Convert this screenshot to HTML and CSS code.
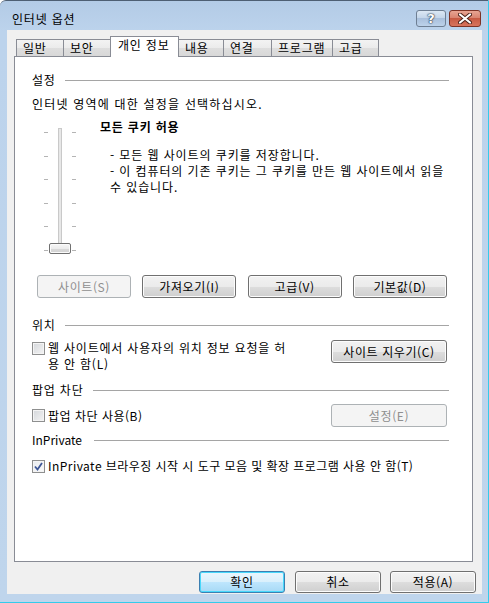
FILE: index.html
```html
<!DOCTYPE html>
<html lang="ko">
<head>
    <meta charset="UTF-8">
    <title>인터넷 옵션</title>
    <link rel="stylesheet" href="styles.css">
</head>
<body>
    <div class="window">
        <!-- Title bar -->
        <div class="titlebar">
            <span class="title">인터넷 옵션</span>
            <div class="caption-buttons">
                <div class="cap-btn help"><span>?</span></div>
                <div class="cap-btn close">
                    <svg width="14" height="11" viewBox="0 0 14 11">
                        <path d="M2 1.5 L12 9.5 M12 1.5 L2 9.5" stroke="#4a2018" stroke-width="4" stroke-linecap="round"/>
                        <path d="M2 1.5 L12 9.5 M12 1.5 L2 9.5" stroke="#ffffff" stroke-width="2.2" stroke-linecap="round"/>
                    </svg>
                </div>
            </div>
        </div>

        <div class="client">
            <!-- Tabs -->
            <div class="tabs">
                <div class="tab w-1">일반</div>
                <div class="tab w-2">보안</div>
                <div class="tab active w-3">개인 정보</div>
                <div class="tab w-4">내용</div>
                <div class="tab w-5">연결</div>
                <div class="tab w-6">프로그램</div>
                <div class="tab w-7">고급</div>
            </div>

            <div class="panel">
                <div class="group-title first"><span>설정</span><div class="rule"></div></div>
                <div class="intro">인터넷 영역에 대한 설정을 선택하십시오.</div>

                <div class="setting-row">
                    <div class="slider">
                        <div class="ticks">
                            <i></i><i></i><i></i><i></i><i></i><i></i>
                        </div>
                        <div class="track"></div>
                        <div class="ticks">
                            <i></i><i></i><i></i><i></i><i></i><i></i>
                        </div>
                        <div class="thumb"></div>
                    </div>
                    <div class="setting-text">
                        <div class="level">모든 쿠키 허용</div>
                        <div class="desc">
                            - 모든 웹 사이트의 쿠키를 저장합니다.<br>
                            - 이 컴퓨터의 기존 쿠키는 그 쿠키를 만든 웹 사이트에서 읽을<br>
                            수 있습니다.
                        </div>
                    </div>
                </div>

                <div class="button-row">
                    <button class="btn wide disabled">사이트(S)</button>
                    <button class="btn wide">가져오기(I)</button>
                    <button class="btn wide">고급(V)</button>
                    <button class="btn wide">기본값(D)</button>
                </div>

                <div class="group-title loc"><span>위치</span><div class="rule"></div></div>
                <div class="check-row top">
                    <span class="checkbox"></span>
                    <span class="check-label loc-label">웹 사이트에서 사용자의 위치 정보 요청을 허<br>용 안 함(L)</span>
                    <button class="btn side">사이트 지우기(C)</button>
                </div>

                <div class="group-title popup"><span>팝업 차단</span><div class="rule"></div></div>
                <div class="check-row mid">
                    <span class="checkbox"></span>
                    <span class="check-label">팝업 차단 사용(B)</span>
                    <button class="btn side disabled">설정(E)</button>
                </div>

                <div class="group-title private"><span>InPrivate</span><div class="rule"></div></div>
                <div class="check-row last">
                    <span class="checkbox checked">
                        <svg width="9" height="9" viewBox="0 0 9 9">
                            <path d="M1 4.5 L3.5 7.5 L8 1" fill="none" stroke="#3d5696" stroke-width="1.8"/>
                        </svg>
                    </span>
                    <span class="check-label private-label">InPrivate 브라우징 시작 시 도구 모음 및 확장 프로그램 사용 안 함(T)</span>
                </div>
            </div>

            <!-- Dialog buttons -->
            <div class="footer">
                <button class="btn dlg default">확인</button>
                <button class="btn dlg">취소</button>
                <button class="btn dlg">적용(A)</button>
            </div>
        </div>
    </div>
</body>
</html>
```

FILE: styles.css
```css
/* Window frame */
* {
    box-sizing: border-box;
}
body {
    margin: 0;
    font-family: "Noto Sans CJK KR", "Noto Sans", sans-serif;
    font-size: 12px;
    line-height: 16px;
    letter-spacing: 0.8px;
    color: #000000;
    background: #ffffff;
}
.window {
    width: 489px;
    height: 603px;
    display: flex;
    flex-direction: column;
    background: linear-gradient(to bottom, #b3cbe6 0px, #bcd3ec 30px, #bfd5ec 100%);
    border-top: 1px solid #4e5f73;
    border-right: 1px solid #34cbeb;
    border-bottom: 1px solid #34cbeb;
    border-top-left-radius: 6px;
}
.titlebar {
    height: 29px;
    display: flex;
    align-items: flex-start;
    justify-content: space-between;
}
.title {
    margin: 10px 0 0 12px;
    font-size: 12px;
    color: #000000;
}
.caption-buttons {
    display: flex;
    gap: 3px;
    margin: 9px 7px 0 0;
}
.cap-btn {
    height: 17px;
    border-radius: 3px;
    display: flex;
    align-items: center;
    justify-content: center;
}
.help {
    width: 30px;
    border: 1px solid #6e7f93;
    background: linear-gradient(to bottom, #dce8f4 0%, #c4d6ea 45%, #a9c0dc 50%, #bcd2ea 100%);
}
.help span {
    font-family: "DejaVu Sans", sans-serif;
    font-weight: bold;
    font-size: 13px;
    letter-spacing: 0;
    color: #ffffff;
    text-shadow: 0 0 1px #28384c, 0 0 1px #28384c, 0 0 2px #28384c;
    line-height: 15px;
}
.close {
    width: 32px;
    border: 1px solid #7d3326;
    background: linear-gradient(to bottom, #e8a593 0%, #d98470 45%, #c75a43 50%, #d8745c 100%);
}

/* Client area */
.client {
    flex: 1;
    margin: 0 6px 8px 7px;
    padding: 6px 6px 0 7px;
    background: #f0f0f0;
    display: flex;
    flex-direction: column;
}
.tabs {
    display: flex;
    align-items: flex-end;
    height: 20px;
    padding-left: 2px;
    position: relative;
    z-index: 1;
}
.tab {
    height: 17px;
    margin-left: -1px;
    padding-left: 6px;
    border: 1px solid #898c95;
    border-bottom: none;
    background: linear-gradient(to bottom, #f3f3f3 0%, #ebebeb 50%, #dedede 51%, #d8d8d8 100%);
    line-height: 15px;
    white-space: nowrap;
}
.tabs .tab:first-child {
    margin-left: 0;
}
.tab.active {
    height: 21px;
    margin-bottom: -1px;
    padding-left: 7px;
    background: #ffffff;
    line-height: 16px;
    position: relative;
}
.w-1 { width: 48px; }
.w-2 { width: 48px; }
.w-3 { width: 69px; }
.w-4 { width: 46px; }
.w-5 { width: 49px; }
.w-6 { width: 62px; }
.w-7 { width: 47px; }

.panel {
    height: 506px;
    margin-right: 3px;
    border: 1px solid #898c95;
    background: #ffffff;
    padding: 15px 23px 0 17px;
}

/* Group headers */
.group-title {
    display: flex;
    align-items: center;
    height: 16px;
}
.group-title .rule {
    flex: 1;
    height: 1px;
    margin-left: 9px;
    background: #a5a5a5;
}
.group-title.loc { margin-top: 19px; }
.group-title.popup { margin-top: 10px; }
.group-title.private { margin-top: 5px; }
.group-title.private span { letter-spacing: 0; }
.group-title.private .rule { margin-left: 12px; }

.intro {
    margin-top: 8px;
    letter-spacing: 1.2px;
}

/* Privacy slider */
.setting-row {
    display: flex;
    margin-top: 7px;
}
.slider {
    position: relative;
    display: flex;
    width: 33px;
    height: 126px;
    margin: 9px 0 0 12px;
}
.ticks {
    width: 4px;
    display: flex;
    flex-direction: column;
    justify-content: space-between;
    padding: 4px 0 3px;
}
.ticks i {
    display: block;
    height: 1px;
    background: #b4b4b4;
}
.track {
    width: 4px;
    height: 121px;
    margin: 0 10px;
    border: 1px solid #c9c9c9;
    background: #e7e7e7;
}
.thumb {
    position: absolute;
    left: 5px;
    bottom: 0;
    width: 22px;
    height: 11px;
    border: 1px solid #707070;
    border-radius: 2px;
    background: linear-gradient(to bottom, #f7f7f7 0%, #ececec 50%, #dadada 51%, #d2d2d2 100%);
    box-shadow: inset 0 0 0 1px #fbfbfb;
}
.setting-text {
    margin-left: 23px;
}
.level {
    font-weight: bold;
}
.desc {
    margin: 12px 0 0 10px;
    letter-spacing: 0.9px;
}

/* Buttons */
.btn {
    font-family: inherit;
    font-size: 12px;
    letter-spacing: 0.6px;
    line-height: 14px;
    color: #000000;
    height: 23px;
    padding: 0;
    border: 1px solid #707070;
    border-radius: 3px;
    background: linear-gradient(to bottom, #f2f2f2 0%, #ebebeb 50%, #dddddd 51%, #cfcfcf 100%);
    box-shadow: inset 0 0 0 1px #fcfcfc;
}
.btn.disabled {
    color: #8f8f8f;
    border-color: #adb2b5;
    background: #f4f4f4;
    box-shadow: none;
}
.button-row {
    display: flex;
    justify-content: space-between;
    margin-top: 21px;
    padding: 0 2px 0 5px;
}
.btn.wide {
    width: 94px;
}
.btn.side {
    width: 116px;
    margin-left: auto;
    margin-right: 2px;
}
.btn.dlg {
    width: 86px;
    height: 22px;
}
.btn.default {
    border-color: #3c7fb1;
    background: linear-gradient(to bottom, #eaf6fd 0%, #d9f0fc 50%, #bee6fd 51%, #a7d9f5 100%);
    box-shadow: inset 0 0 0 1px #48d8fb;
}

/* Checkboxes */
.check-row {
    display: flex;
}
.check-row.top {
    margin-top: 7px;
    align-items: flex-start;
}
.check-row.mid {
    margin-top: 6px;
    align-items: center;
}
.check-row.last {
    margin-top: 10px;
    align-items: center;
}
.check-label {
    letter-spacing: 0.5px;
}
.loc-label {
    letter-spacing: 0.8px;
}
.private-label {
    letter-spacing: 0.45px;
}
.checkbox {
    flex: none;
    width: 13px;
    height: 13px;
    margin-right: 3px;
    border: 1px solid #8e8f8f;
    background: linear-gradient(135deg, #d4d7db 0%, #f4f4f4 100%);
    box-shadow: inset 0 0 0 1px #f4f4f4;
    display: flex;
    align-items: center;
    justify-content: center;
}
.check-row.top .checkbox {
    margin-top: 2px;
}
.checkbox.checked {
    background: linear-gradient(135deg, #e8ebef 0%, #fafafa 100%);
}

/* Dialog footer */
.footer {
    display: flex;
    justify-content: flex-end;
    gap: 10px;
    margin-top: 9px;
}
.footer .btn:last-child {
    margin-left: -1px;
}
```
